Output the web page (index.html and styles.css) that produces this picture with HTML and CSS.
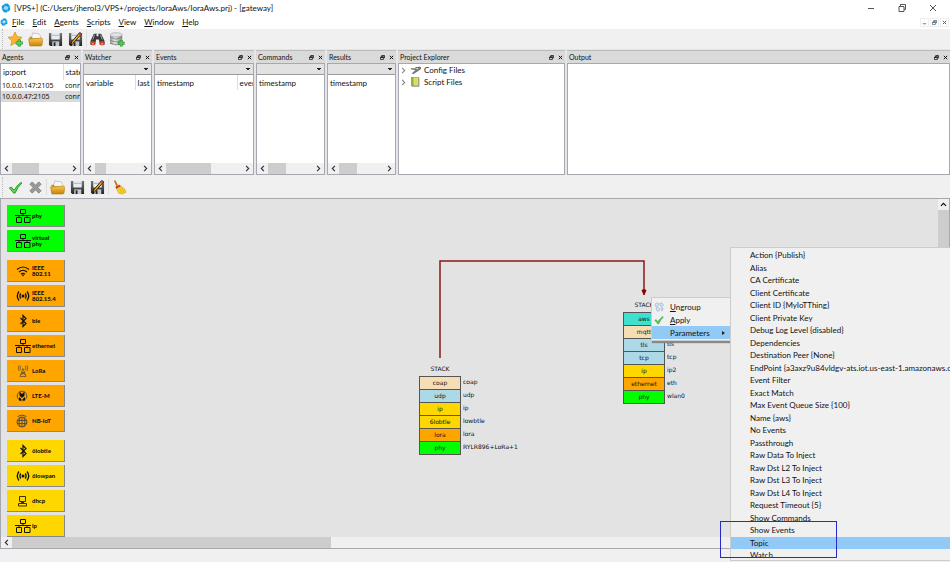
FILE: index.html
```html
<!DOCTYPE html>
<html lang="en">
<head>
<meta charset="utf-8">
<title>[VPS+] gateway</title>
<link rel="stylesheet" href="styles.css">
</head>
<body>
<svg class="defs" aria-hidden="true">
  <defs>
    <linearGradient id="gold" x1="0" y1="0" x2="0" y2="1"><stop offset="0" stop-color="#f9c74c"/><stop offset="1" stop-color="#c98205"/></linearGradient>
    <linearGradient id="steel" x1="0" y1="0" x2="0" y2="1"><stop offset="0" stop-color="#777"/><stop offset="1" stop-color="#222"/></linearGradient>
    <linearGradient id="silver" x1="0" y1="0" x2="1" y2="0"><stop offset="0" stop-color="#999"/><stop offset=".4" stop-color="#e8e8e8"/><stop offset="1" stop-color="#888"/></linearGradient>
  </defs>
  <symbol id="app" viewBox="0 0 12 12"><path d="M4 1l4-.5L11 4v4l-3 3-4 .5L1 8V4z" fill="#139be0"/><circle cx="6" cy="6" r="2.200" fill="#fff"/><path d="M6 5v2M5 6h2" stroke="#139be0" stroke-width=".7"/><path d="M3 0l1 3M0 8l3-1M8 12V9M12 4L9 5" stroke="#fff" stroke-width=".6"/></symbol>
  <symbol id="star" viewBox="0 0 16 16"><path d="M7.500 0l2.200 5 5.300.6-4 3.600 1.100 5.300-4.600-2.700L3 14.500l1-5.300L0 5.600 5.300 5z" fill="#ffb52c" stroke="#d18a16" stroke-width=".7"/><path d="M12 8v7.500M8.300 11.700h7.500" stroke="#278f2c" stroke-width="3.400"/><path d="M12 8.600v6.400M8.800 11.700h6.500" stroke="#5bc957" stroke-width="2"/></symbol>
  <symbol id="folder" viewBox="0 0 16 16"><path d="M3.500 7.500L5 1l7 1 1.500 2.500v4z" fill="#f6f6f6" stroke="#aaa" stroke-width=".6"/><path d="M1.500 5h2.500l1 2h9.500v6.500h-13z" fill="#b87808" opacity=".8"/><path d="M.5 7.500L14 6.500q1.800 0 1.700 1.800l-.7 5.700-1 1H2z" fill="url(#gold)" stroke="#a96f08" stroke-width=".5"/></symbol>
  <symbol id="save" viewBox="0 0 16 16"><path d="M1 1h14v14H2.500L1 13.500z" fill="url(#steel)"/><path d="M3.500 1h9v7h-9z" fill="#e8edf2"/><path d="M4 3h8v1H4z" fill="#a6b2bd"/><path d="M4.500 10h7.500v5H4.500z" fill="#c5c9cc"/><path d="M6 11h2v4H6z" fill="#26292c"/></symbol>
  <symbol id="saveas" viewBox="0 0 16 16"><use href="#save"/><path d="M3 14.500l1-4L12.500.5l2 1.500-9 10z" fill="#e8a92f" stroke="#2a1c09" stroke-width="1"/><path d="M12.500.5l2 1.500-1.200 1.500-2-1.500z" fill="#c93b2d"/><path d="M3 14.500l.6-2 1 .8z" fill="#111"/></symbol>
  <symbol id="find" viewBox="0 0 16 16"><path d="M4 2L7 1.500v3h2v-3l3 .5 3.500 7.500v4h-5L9.500 8h-3l-1 5.500h-5v-4z" fill="#38393c"/><path d="M4.800 3L3 8M11.200 3L13 8" stroke="#a5a7aa" stroke-width="1"/><ellipse cx="3" cy="12" rx="2.500" ry="2.400" fill="#d83b1c"/><ellipse cx="13" cy="12" rx="2.500" ry="2.400" fill="#d83b1c"/><circle cx="3" cy="12.500" r="1" fill="#ff936b"/><circle cx="13" cy="12.500" r="1" fill="#ff936b"/></symbol>
  <symbol id="db" viewBox="0 0 16 16"><path d="M0 3v9.500q6.500 3.200 13 0V3z" fill="url(#silver)"/><ellipse cx="6.500" cy="3" rx="6.500" ry="2.200" fill="#e4e4e4" stroke="#888" stroke-width=".5"/><path d="M0 6q6.500 3.200 13 0M0 9q6.500 3.200 13 0M0 12q6.500 3.200 13 0" fill="none" stroke="#777" stroke-width=".8"/><path d="M12 8.500v7M8.500 12h7" stroke="#278f2c" stroke-width="3"/><path d="M12 9v6M9 12h6" stroke="#5bc957" stroke-width="1.800"/></symbol>
  <symbol id="check" viewBox="0 0 16 16"><path d="M1.500 8.500l2-1 3 3.500Q9.500 5.500 14 2.500l.8.700Q10.500 7 7.500 14H6z" fill="#64d45a" stroke="#259b2b" stroke-width="1"/></symbol>
  <symbol id="cross" viewBox="0 0 16 16"><path d="M2 4.500L4.500 2 8 5.500 11.500 2 14 4.500 10.500 8l3.500 3.500-2.500 2.500L8 10.500 4.500 14 2 11.500 5.500 8z" fill="#999" stroke="#777" stroke-width=".8"/></symbol>
  <symbol id="broom" viewBox="0 0 16 16"><path d="M2 .7l1.600-.5 3.200 6.300-1.900.9z" fill="#bd7928"/><path d="M4 7.200l3.800-2 5.700 4.300 1.500 3.500-4.300 2L7 14z" fill="#f7d32f" stroke="#c79c12" stroke-width=".6"/><path d="M3.700 7.500L8 5.200l1.300 1.500-4.700 2.500z" fill="#c3312a"/><path d="M8 9l3 5M10 8l3 5" stroke="#c79c12" stroke-width=".6"/></symbol>
  <symbol id="float" viewBox="0 0 6 6"><path d="M2 3V.8h3.500v2.700H4M.5 2.500H4v3H.5zM2 1.200h3.500M.5 3H4" fill="none" stroke="currentColor" stroke-width=".9"/></symbol>
  <symbol id="close" viewBox="0 0 6 6"><path d="M1 1l4 4M5 1L1 5" fill="none" stroke="currentColor" stroke-width="1.200"/></symbol>
  <symbol id="chev" viewBox="0 0 6 6"><path d="M4.200.8L2 3l2.200 2.200" fill="none" stroke="currentColor" stroke-width="1"/></symbol>
  <symbol id="net" viewBox="0 0 16 14"><path d="M5.500.5h5v4h-5zM1.500 8.500h5v5h-5zM9.500 8.500h5.500v5H9.500zM8 4.500v2M0 6.500h16M4 6.500v2M12 6.500v2" fill="none" stroke="currentColor" stroke-width="1"/></symbol>
  <symbol id="wifi" viewBox="0 0 16 14"><path d="M2 5.500q6-5 12 0M4 8q4-3.500 8 0M6 10.200q2-1.800 4 0" fill="none" stroke="currentColor" stroke-width="1.200"/><circle cx="8" cy="11.300" r=".9" fill="currentColor"/></symbol>
  <symbol id="radio" viewBox="0 0 16 14"><path d="M4 2.500Q.5 7 4 11.500M12 2.500Q15.500 7 12 11.500M5.800 4.500q-1.800 2.500 0 5M10.200 4.500q1.800 2.500 0 5" fill="none" stroke="currentColor" stroke-width="1.300"/><circle cx="8" cy="7" r="1.500" fill="currentColor"/></symbol>
  <symbol id="bt" viewBox="0 0 16 14"><path d="M5.500 4l5.500 5.500-3 3v-11l3 3L5.500 10" fill="none" stroke="currentColor" stroke-width="1.200"/></symbol>
  <symbol id="tower" viewBox="0 0 16 14"><path d="M8 4.500L5 12.500h6zM6.500 8.500h3M5.500 11l4.500-2.500M10.500 11L6.500 8.500M5.800 2Q4.500 4 5.800 6M4.200 1.200Q2.200 4 4.200 7M10.200 2Q11.500 4 10.200 6M11.800 1.200Q13.800 4 11.800 7" fill="none" stroke="#65502c" stroke-width=".8"/></symbol>
  <symbol id="ltem" viewBox="0 0 16 14"><circle cx="7" cy="7" r="4.800" fill="none" stroke="#555" stroke-width="1"/><path d="M4.500 2.500L7 5l2.500-2.500v4.200L7 9 4.500 6.700z" fill="#111"/><path d="M4 8l3 2.500L10 8v3.500H4z" fill="#111"/><path d="M6.500 8.500h1V12h-1z" fill="#ffa500"/></symbol>
  <symbol id="globe" viewBox="0 0 16 14"><circle cx="7" cy="8" r="4.900" fill="none" stroke="#4b4538" stroke-width="1"/><path d="M7 3v10M2.500 6.500h9M2.500 9.500h9M5 3.500q-1.800 4.500 0 9M9 3.500q1.800 4.500 0 9M2.500 2.500q4.500-3 9 0" fill="none" stroke="#4b4538" stroke-width=".9"/></symbol>
  <symbol id="pc" viewBox="0 0 16 14"><path d="M4.500 2.500h6v5h-6zM3.500 9.500h8v2.500h-8zM6 8.500h3" fill="none" stroke="#383200" stroke-width="1"/></symbol>
  <symbol id="tools" viewBox="0 0 12 10"><path d="M1 3h5l2 1.500 2-2-.5-1.500L12 2v2L9 6 3.500 9.500 2 8.500l4-3.500-5-.5z" fill="#777"/><path d="M6 2.500h4" stroke="#333"/></symbol>
  <symbol id="book" viewBox="0 0 10 10"><path d="M1 0h7v9H1z" fill="#d6df68" stroke="#828b36" stroke-width=".7"/><path d="M1 0h2v9H1z" fill="#9fab34"/><path d="M8.500 1v8.500H2" fill="none" stroke="#aaa"/></symbol>
  <symbol id="ungroup" viewBox="0 0 10 10"><path d="M1 3q0-2 2-2h1l1 1-1 2-2 1zM6 1h2l1.500 2L8 5 6 4zM2 6l2-1 2 2-1 2H3zM7 6h2v2L7.500 9z" fill="#d4e2f2" stroke="#9cb3d2" stroke-width=".6"/></symbol>
</svg>

<div class="app">
  <header class="titlebar">
    <svg class="logo"><use href="#app"/></svg>
    <h1>[VPS+] (C:/Users/jherol3/VPS+/projects/loraAws/loraAws.prj) - [gateway]</h1>
    <div class="window-controls">
      <button aria-label="Minimize"><svg viewBox="0 0 8 8"><path d="M1 4.500h6"/></svg></button>
      <button aria-label="Restore"><svg viewBox="0 0 8 8"><path d="M1 2.500h5v5H1zM2.500 2.500v-2h5v5H6"/></svg></button>
      <button aria-label="Close"><svg viewBox="0 0 8 8"><path d="M1 1l6 6M7 1L1 7"/></svg></button>
    </div>
  </header>

  <nav class="menubar">
    <svg class="logo small"><use href="#app"/></svg>
    <button><u>F</u>ile</button><button><u>E</u>dit</button><button><u>A</u>gents</button><button><u>S</u>cripts</button><button><u>V</u>iew</button><button><u>W</u>indow</button><button><u>H</u>elp</button>
    <div class="child-controls">
      <button aria-label="Minimize document"><svg viewBox="0 0 6 6"><path d="M1 4.500h4" stroke="currentColor"/></svg></button>
      <button aria-label="Restore document"><svg><use href="#float"/></svg></button>
      <button aria-label="Close document"><svg><use href="#close"/></svg></button>
    </div>
  </nav>

  <div class="toolbar main-tools">
    <button aria-label="New"><svg><use href="#star"/></svg></button>
    <button aria-label="Open"><svg><use href="#folder"/></svg></button>
    <button aria-label="Save"><svg><use href="#save"/></svg></button>
    <button aria-label="Save as"><svg><use href="#saveas"/></svg></button>
    <span class="divider"></span>
    <button aria-label="Find"><svg><use href="#find"/></svg></button>
    <button aria-label="Add database"><svg><use href="#db"/></svg></button>
  </div>

  <main class="docks">
    <section class="dock">
      <header><h2>Agents</h2><button aria-label="Float Agents"><svg><use href="#float"/></svg></button><button aria-label="Close Agents"><svg><use href="#close"/></svg></button></header>
      <div class="pane">
        <table class="agents">
          <thead><tr><th>ip:port</th><th>state</th></tr></thead>
          <tbody><tr><td>10.0.0.147:2105</td><td>connected</td></tr><tr class="selected"><td>10.0.0.47:2105</td><td>connected</td></tr></tbody>
        </table>
        <div class="hscroll"><svg><use href="#chev"/></svg><i class="thumb w27"></i><svg class="flip"><use href="#chev"/></svg></div>
      </div>
    </section>
    <section class="dock">
      <header><h2>Watcher</h2><button aria-label="Float Watcher"><svg><use href="#float"/></svg></button><button aria-label="Close Watcher"><svg><use href="#close"/></svg></button></header>
      <div class="pane">
        <select aria-label="Watcher filter"><option></option></select>
        <table class="log watch"><thead><tr><th>variable</th><th>last</th></tr></thead></table>
        <div class="hscroll"><svg><use href="#chev"/></svg><i class="thumb w11"></i><svg class="flip"><use href="#chev"/></svg></div>
      </div>
    </section>
    <section class="dock">
      <header><h2>Events</h2><button aria-label="Float Events"><svg><use href="#float"/></svg></button><button aria-label="Close Events"><svg><use href="#close"/></svg></button></header>
      <div class="pane">
        <select aria-label="Events filter"><option></option></select>
        <table class="log events"><thead><tr><th>timestamp</th><th>event</th></tr></thead></table>
        <div class="hscroll"><svg><use href="#chev"/></svg><i class="thumb w45"></i><svg class="flip"><use href="#chev"/></svg></div>
      </div>
    </section>
    <section class="dock">
      <header><h2>Commands</h2><button aria-label="Float Commands"><svg><use href="#float"/></svg></button><button aria-label="Close Commands"><svg><use href="#close"/></svg></button></header>
      <div class="pane">
        <select aria-label="Commands filter"><option></option></select>
        <table class="log"><thead><tr><th>timestamp</th></tr></thead></table>
        <div class="hscroll"><svg><use href="#chev"/></svg><i class="thumb w18"></i><svg class="flip"><use href="#chev"/></svg></div>
      </div>
    </section>
    <section class="dock">
      <header><h2>Results</h2><button aria-label="Float Results"><svg><use href="#float"/></svg></button><button aria-label="Close Results"><svg><use href="#close"/></svg></button></header>
      <div class="pane">
        <select aria-label="Results filter"><option></option></select>
        <table class="log"><thead><tr><th>timestamp</th></tr></thead></table>
        <div class="hscroll"><svg><use href="#chev"/></svg><i class="thumb w18"></i><svg class="flip"><use href="#chev"/></svg></div>
      </div>
    </section>
    <section class="dock">
      <header><h2>Project Explorer</h2><button aria-label="Float Project Explorer"><svg><use href="#float"/></svg></button><button aria-label="Close Project Explorer"><svg><use href="#close"/></svg></button></header>
      <div class="pane">
        <ul class="tree">
          <li><button><svg class="arrow flip"><use href="#chev"/></svg><svg><use href="#tools"/></svg>Config Files</button></li>
          <li><button><svg class="arrow flip"><use href="#chev"/></svg><svg><use href="#book"/></svg>Script Files</button></li>
        </ul>
      </div>
    </section>
    <section class="dock">
      <header><h2>Output</h2><button aria-label="Float Output"><svg><use href="#float"/></svg></button><button aria-label="Close Output"><svg><use href="#close"/></svg></button></header>
      <div class="pane"></div>
    </section>
  </main>

  <div class="toolbar edit-tools">
    <button aria-label="Apply all"><svg><use href="#check"/></svg></button>
    <button aria-label="Discard"><svg><use href="#cross"/></svg></button>
    <span class="divider"></span>
    <button aria-label="Open stack"><svg><use href="#folder"/></svg></button>
    <button aria-label="Save stack"><svg><use href="#save"/></svg></button>
    <button aria-label="Save stack as"><svg><use href="#saveas"/></svg></button>
    <span class="divider"></span>
    <button aria-label="Clear"><svg><use href="#broom"/></svg></button>
  </div>

  <section class="workspace">
    <div class="scene">
      <div class="palette">
        <div class="group green">
          <button><svg><use href="#net"/></svg><span>phy</span></button>
          <button><svg><use href="#net"/></svg><span>virtual<br>phy</span></button>
        </div>
        <div class="group orange">
          <button><svg><use href="#wifi"/></svg><span>IEEE<br>802.11</span></button>
          <button><svg><use href="#radio"/></svg><span>IEEE<br>802.15.4</span></button>
          <button><svg><use href="#bt"/></svg><span>ble</span></button>
          <button><svg><use href="#net"/></svg><span>ethernet</span></button>
          <button><svg><use href="#tower"/></svg><span>LoRa</span></button>
          <button><svg><use href="#ltem"/></svg><span>LTE-M</span></button>
          <button><svg><use href="#globe"/></svg><span>NB-IoT</span></button>
        </div>
        <div class="group gold">
          <button><svg><use href="#bt"/></svg><span>6lobtle</span></button>
          <button><svg><use href="#radio"/></svg><span>6lowpan</span></button>
          <button><svg><use href="#pc"/></svg><span>dhcp</span></button>
          <button><svg><use href="#net"/></svg><span>ip</span></button>
        </div>
      </div>

      <svg class="link" viewBox="0 0 210 100"><path d="M3 99V2h204v30" fill="none" stroke="#8b1a1a" stroke-width="1.500"/><path d="M205 31h4l-2 5z" fill="#8b0000" stroke="#8b0000"/></svg>

      <dl class="stack device">
        <dt class="name">STACK</dt>
        <div><dt class="wheat">coap</dt><dd>coap</dd></div>
        <div><dt class="blue">udp</dt><dd>udp</dd></div>
        <div><dt class="gold">ip</dt><dd>ip</dd></div>
        <div><dt class="gold">6lobtle</dt><dd>lowbtle</dd></div>
        <div><dt class="orange">lora</dt><dd>lora</dd></div>
        <div><dt class="green">phy</dt><dd>RYLR896+LoRa+1</dd></div>
      </dl>
      <dl class="stack cloud">
        <dt class="name">STACK</dt>
        <div><dt class="teal">aws</dt><dd></dd></div>
        <div><dt class="wheat">mqtt</dt><dd></dd></div>
        <div><dt class="blue">tls</dt><dd>tls</dd></div>
        <div><dt class="blue">tcp</dt><dd>tcp</dd></div>
        <div><dt class="gold">ip</dt><dd>ip2</dd></div>
        <div><dt class="orange">ethernet</dt><dd>eth</dd></div>
        <div><dt class="green">phy</dt><dd>wlan0</dd></div>
      </dl>
    </div>
    <div class="vscroll"><svg><use href="#chev"/></svg><i></i></div>
    <div class="hscroll canvas-scroll"><svg><use href="#chev"/></svg><i class="thumb wide"></i><svg class="flip"><use href="#chev"/></svg></div>
  </section>
  <footer class="statusbar"></footer>

  <div class="menu context">
    <button><svg><use href="#ungroup"/></svg><span><u>U</u>ngroup</span></button>
    <button><svg><use href="#check"/></svg><span><u>A</u>pply</span></button>
    <button class="active"><i></i><span>Parameters</span><b></b></button>
  </div>
  <div class="menu params">
    <div class="rows">
      <button>Action {Publish}</button>
      <button>Alias</button>
      <button>CA Certificate</button>
      <button>Client Certificate</button>
      <button>Client ID {MyIoTThing}</button>
      <button>Client Private Key</button>
      <button>Debug Log Level {disabled}</button>
      <button>Dependencies</button>
      <button>Destination Peer {None}</button>
      <button>EndPoint {a3axz9u84vldgv-ats.iot.us-east-1.amazonaws.com}</button>
      <button>Event Filter</button>
      <button>Exact Match</button>
      <button>Max Event Queue Size {100}</button>
      <button>Name {aws}</button>
      <button>No Events</button>
      <button>Passthrough</button>
      <button>Raw Data To Inject</button>
      <button>Raw Dst L2 To Inject</button>
      <button>Raw Dst L3 To Inject</button>
      <button>Raw Dst L4 To Inject</button>
      <button>Request Timeout {5}</button>
      <button>Show Commands</button>
      <button>Show Events</button>
      <button class="active">Topic</button>
      <button>Watch</button>
    </div>
  </div>
  <div class="callout"></div>
</div>
</body>
</html>
```
FILE: styles.css
```css
* { box-sizing: border-box; }
body { margin: 0; font: 8px/12px Lato, "Open Sans", sans-serif; color: #111; }
button { border: 0; padding: 0; margin: 0; background: none; font: inherit; color: inherit; white-space: nowrap; }
svg { display: block; flex: none; }
h1, h2, ul, dl, dd { margin: 0; padding: 0; font-size: inherit; font-weight: 400; }
table { border-collapse: collapse; }
.defs { position: absolute; width: 0; height: 0; }

.app { position: relative; display: flex; flex-direction: column; height: 100vh; overflow: hidden; background: #f0f0f0; }

.titlebar { display: flex; align-items: center; height: 15px; padding-left: 1px; background: #fff; }
.titlebar h1 { flex: 1; padding-left: 3px; }
.logo { width: 10px; height: 10px; }
.logo.small { width: 8px; height: 8px; margin-right: 4px; }
.window-controls { display: flex; gap: 23px; padding-right: 13px; }
.window-controls svg { width: 8px; height: 8px; fill: none; stroke: #555; }

.menubar { display: flex; align-items: center; height: 14px; background: #fff; }
.menubar > button { margin-right: 8px; }
u { text-underline-offset: 1px; }
.child-controls { display: flex; gap: 1px; margin-left: auto; padding-right: 1px; color: #4a6580; }
.child-controls button { padding: 1px; border: 1px solid #eee; }
.child-controls svg { width: 5px; height: 5px; }

.toolbar { display: flex; align-items: center; gap: 5px; flex: none; height: 20px; padding-left: 5px; margin-left: 2px; border-left: 1px dotted #bbb; }
.toolbar svg { width: 15px; height: 15px; }
.divider { width: 1px; height: 16px; margin: 0 -2px; background: #ddd; }

.docks { display: grid; grid-template-columns: 81px 69px 100px 69px 69px 167px 1fr; gap: 2px; height: 126px; flex: none; padding-top: 1px; background: #e6e6ea; }
.dock { display: flex; flex-direction: column; min-width: 0; }
.dock header { display: flex; align-items: center; gap: 4px; height: 13px; padding: 0 2px; border-top: 1px solid #bbb; background: #dadada; font-size: 7px; }
.dock h2 { flex: 1; }
.dock header svg { width: 5px; height: 5px; }
.pane { display: flex; flex: 1; flex-direction: column; min-height: 0; overflow: hidden; border: 1px solid #a5a8ae; background: #fff; }
.pane select { appearance: none; height: 11px; flex: none; border: 0; border-bottom: 1px solid #999; border-radius: 0; background: linear-gradient(to bottom right, #222 50%, transparent 51%) right 3px center / 2px 2px no-repeat, linear-gradient(to bottom left, #222 50%, transparent 51%) right 5px center / 2px 2px no-repeat, #e2e2e2; }
th, td { padding: 0; font-weight: 400; text-align: left; white-space: nowrap; }
.agents { table-layout: fixed; width: 130px; line-height: 11px; }
.agents th { height: 16px; padding-left: 2px; }
.agents th:first-child { width: 62px; }
.agents td { height: 11px; padding-left: 1px; font: 7px/11px "Noto Sans", "Open Sans", sans-serif; }
.agents th + th { border-left: 1px solid #ddd; }
.agents td + td { padding-left: 2px; }
.selected { background: #d9d9d9; }
.log { table-layout: fixed; width: 130px; }
.log th { height: 15px; padding-left: 2px; }
.log th + th { border-left: 1px solid #ddd; }
.watch th:first-child { width: 51px; }
.events th:first-child { width: 82px; }
.hscroll { display: flex; align-items: center; height: 11px; flex: none; margin-top: auto; background: #f0f0f0; color: #333; }
.hscroll svg { width: 7px; height: 7px; margin: 0 2px; }
.hscroll .flip { margin-left: auto; }
.flip { transform: scaleX(-1); }
.thumb { height: 100%; background: #cdcdcd; }
.w27 { width: 27px; } .w11 { width: 11px; } .w45 { width: 45px; } .w18 { width: 18px; }
.wide { width: 34%; }
.tree { list-style: none; }
.tree button { display: flex; align-items: center; gap: 3px; height: 12px; padding-left: 1px; }
.tree svg { width: 11px; height: 10px; }
.tree .arrow { width: 7px; height: 7px; color: #888; }

.edit-tools { margin-top: 2px; margin-bottom: 1px; }

.workspace { display: grid; grid-template: 1fr 11px / 1fr 11px; flex: 1; min-height: 0; border: 1px solid #a5a8ae; background: #f0f0f0; }
.scene { position: relative; min-height: 0; overflow: hidden; background: #e3e3e3; }
.vscroll { display: flex; flex-direction: column; background: #f0f0f0; }
.vscroll svg { width: 7px; height: 7px; margin: 2px; transform: rotate(90deg); }
.vscroll i { height: 50%; background: #cdcdcd; }
.statusbar { height: 13px; flex: none; }

.palette { display: flex; flex-direction: column; gap: 8px; padding: 6px; }
.group { display: flex; flex-direction: column; gap: 3px; width: 58px; background: none; }
.group button { display: flex; align-items: center; gap: 1px; height: 22px; padding-left: 8px; border-right: 1px solid #888; border-bottom: 1px solid #888; font: 900 6px/6px Lato, sans-serif; text-align: left; }
.group svg { width: 16px; height: 14px; }
.green button, dt.green { background: #0f0; }
.orange button, dt.orange { background: #ffa500; }
.gold button, dt.gold { background: gold; }
.wheat { background: wheat; }
.blue { background: lightblue; }
.teal { background: turquoise; }

.link { position: absolute; left: 436px; top: 60px; width: 210px; height: 100px; }
.stack { position: absolute; font: 6px/12px "DejaVu Sans", sans-serif; }
.device { left: 418px; top: 164px; }
.cloud { left: 622px; top: 100px; }
.stack .name { width: 42px; height: 13px; text-align: center; }
.stack div { display: flex; height: 13px; }
.stack div dt { width: 42px; border: 1px solid #555; border-bottom: 0; text-align: center; }
.stack div:last-child { height: 14px; }
.stack div:last-child dt { border-bottom: 1px solid #555; }
.stack dd { padding-left: 2px; }

.menu { position: absolute; border: 1px solid #ccc; background: #f0f0f0; }
.context { left: 651px; top: 297px; width: 80px; padding: 2px 0 1px; box-shadow: 1px 2px 1px #888; }
.context button { display: flex; align-items: center; width: 100%; height: 13px; padding-left: 2px; }
.context svg, .context i { width: 10px; height: 10px; }
.context span { padding-left: 6px; }
.context b { margin: 0 5px 0 auto; border: 2px solid transparent; border-left: 3px solid #222; border-right: 0; }
.params { left: 730px; right: -1px; top: 247px; height: 314px; padding-top: 1px; }
.rows { height: 308px; display: grid; grid-template-rows: repeat(24, minmax(0, 1fr)) 8px; overflow: hidden; }
.rows button { padding-left: 19px; text-align: left; overflow: hidden; line-height: 12px; }
.rows button:last-child { align-self: start; height: 8px; }
.menu .active { background: #91c9f7; }
.callout { position: absolute; left: 720px; top: 521px; width: 117px; height: 37px; border: 1px solid #2a2ac8; }
```
